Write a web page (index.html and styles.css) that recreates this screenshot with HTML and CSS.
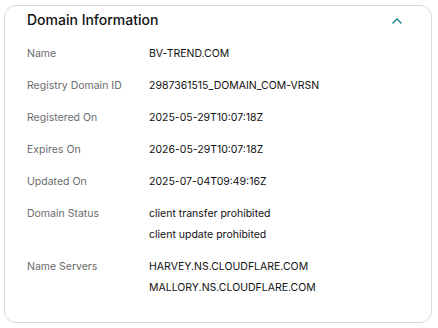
FILE: index.html
```html
<!DOCTYPE html>
<html lang="en">
<head>
    <meta charset="UTF-8">
    <meta name="viewport" content="width=device-width, initial-scale=1.0">
    <title>Domain Information</title>
    <link rel="stylesheet" href="styles.css">
</head>
<body>
    <div class="info-card">
        <div class="info-header">
            <h2>Domain Information</h2>
            <svg class="chevron" width="12" height="8" viewBox="0 0 12 8">
                <path d="M1.5 6.5 L6 2 L10.5 6.5" fill="none" stroke="#16868c" stroke-width="1.4"/>
            </svg>
        </div>
        <div class="info-row">
            <div class="label">Name</div>
            <div class="values"><p>BV-TREND.COM</p></div>
        </div>
        <div class="info-row">
            <div class="label">Registry Domain ID</div>
            <div class="values"><p>2987361515_DOMAIN_COM-VRSN</p></div>
        </div>
        <div class="info-row">
            <div class="label">Registered On</div>
            <div class="values"><p>2025-05-29T10:07:18Z</p></div>
        </div>
        <div class="info-row">
            <div class="label">Expires On</div>
            <div class="values"><p>2026-05-29T10:07:18Z</p></div>
        </div>
        <div class="info-row">
            <div class="label">Updated On</div>
            <div class="values"><p>2025-07-04T09:49:16Z</p></div>
        </div>
        <div class="info-row">
            <div class="label">Domain Status</div>
            <div class="values">
                <p>client transfer prohibited</p>
                <p>client update prohibited</p>
            </div>
        </div>
        <div class="info-row">
            <div class="label">Name Servers</div>
            <div class="values">
                <p>HARVEY.NS.CLOUDFLARE.COM</p>
                <p>MALLORY.NS.CLOUDFLARE.COM</p>
            </div>
        </div>
    </div>
</body>
</html>
```

FILE: styles.css
```css
body {
    font-family: Inter, "Noto Sans", sans-serif;
    background-color: #fff;
    margin: 0;
    padding: 5px 6px 5px 4px;
}

.info-card {
    border: 1px solid #d8d8d8;
    border-radius: 12px;
    padding: 0 22px 19px 22px;
    box-sizing: border-box;
    height: 318px;
}

.info-header {
    display: flex;
    align-items: center;
    justify-content: space-between;
    padding: 2px 6px 6px 0;
}

.info-header h2 {
    margin: 0;
    font-size: 14px;
    line-height: 24px;
    font-weight: 500;
    color: #111;
}

.chevron {
    margin-top: 1px;
}

.info-row {
    display: flex;
    padding: 5px 0 6px;
    font-size: 10.5px;
    line-height: 21px;
}

.label {
    width: 122px;
    color: #6b6b6b;
}

.values p {
    margin: 0;
    color: #111;
}
```
